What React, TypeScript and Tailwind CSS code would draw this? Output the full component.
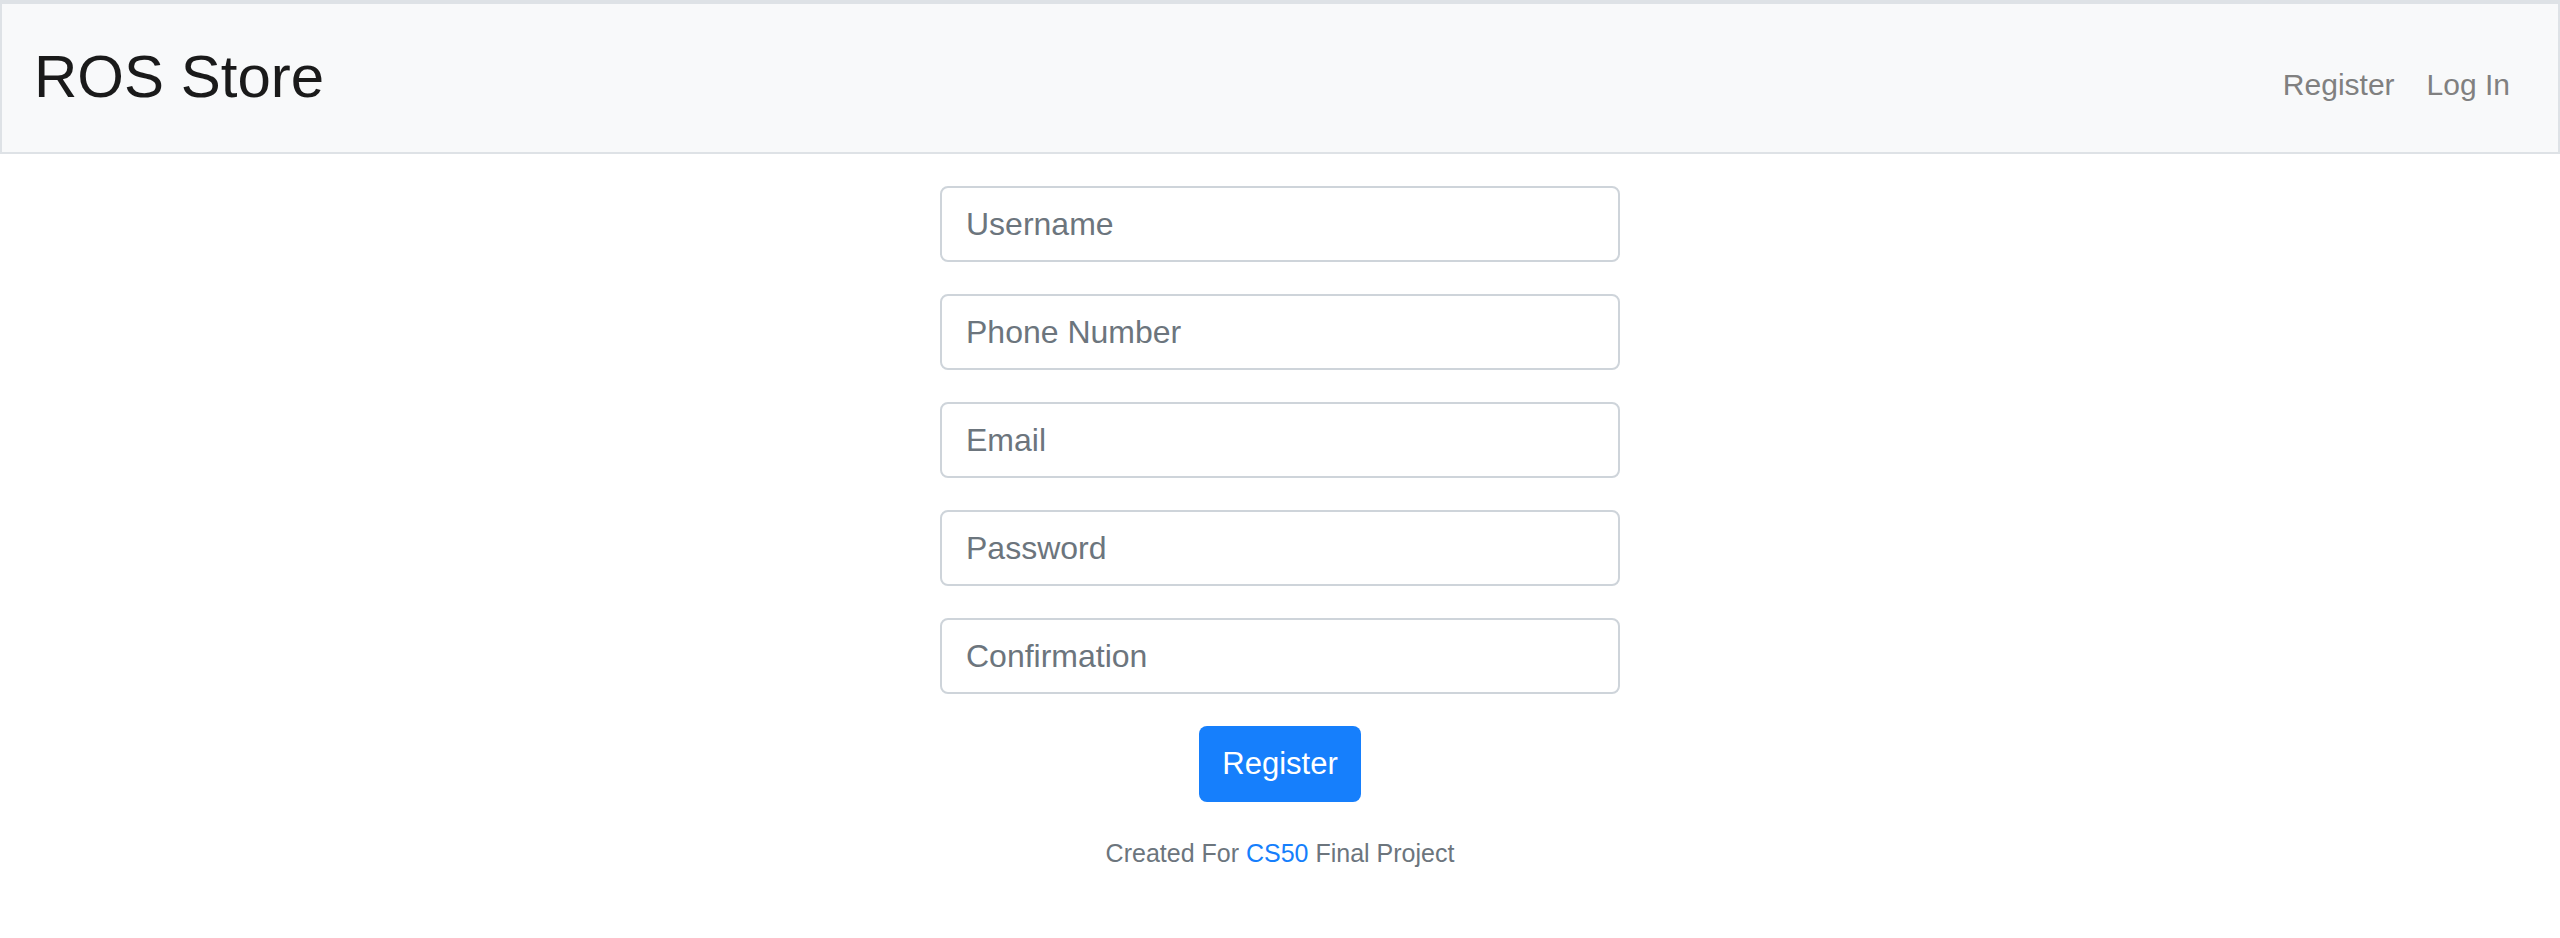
import React from 'react';

const fields = ['Username', 'Phone Number', 'Email', 'Password', 'Confirmation'];

const App: React.FC = () => {
  return (
    <div className="min-h-screen bg-white font-['Liberation_Sans',Arial,sans-serif]">
      {/* Navbar */}
      <nav className="h-[154px] flex items-center justify-between bg-[#f8f9fa] border-t-4 border-x-2 border-b-2 border-[#dee2e6] px-8">
        <a className="text-[60px] leading-none text-[#1a1a1a] pb-[2px]">ROS Store</a>
        <div className="flex items-center mt-[14px]">
          <a className="px-4 text-[30px] leading-none text-[#808080]">Register</a>
          <a className="px-4 text-[30px] leading-none text-[#808080]">Log In</a>
        </div>
      </nav>

      {/* Form */}
      <form className="w-[680px] mx-auto mt-8 flex flex-col items-center">
        {fields.map((f) => (
          <input
            key={f}
            type={f === 'Password' || f === 'Confirmation' ? 'password' : 'text'}
            placeholder={f}
            className="w-full h-[76px] mb-8 px-6 text-[32px] text-[#495057] placeholder:text-[#6c757d] bg-white border-2 border-[#ced4da] rounded-lg outline-none"
          />
        ))}
        <button
          type="button"
          className="h-[76px] px-[23px] text-[31px] text-white bg-[#167ffc] rounded-lg"
        >
          Register
        </button>
      </form>

      {/* Footer */}
      <footer className="mt-[33px] text-center text-[25px] leading-[1.5] text-[#6c757d]">
        Created For <a className="text-[#167ffc]">CS50</a> Final Project
      </footer>
    </div>
  );
};

export default App;
